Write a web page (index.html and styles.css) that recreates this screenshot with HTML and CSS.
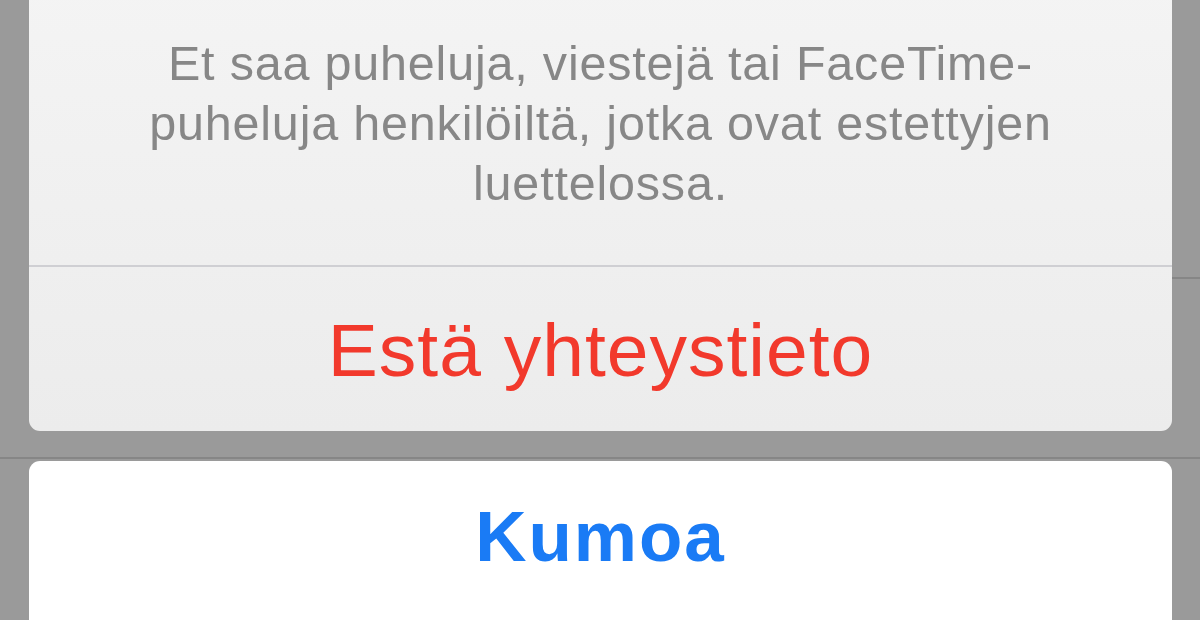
FILE: index.html
```html
<!DOCTYPE html>
<html lang="fi">
<head>
    <meta charset="UTF-8">
    <title>Estä yhteystieto</title>
    <link rel="stylesheet" href="styles.css">
</head>
<body>
<div class="sheet-wrap">
    <div class="sheet sheet-main">
        <p class="sheet-msg">Et saa puheluja, viestejä tai FaceTime-<br>puheluja henkilöiltä, jotka ovat estettyjen<br>luettelossa.</p>
        <div class="sheet-btn btn-danger">Estä yhteystieto</div>
    </div>
    <div class="sheet sheet-cancel">
        <div class="sheet-btn btn-cancel">Kumoa</div>
    </div>
</div>
</body>
</html>
```

FILE: styles.css
```css
html, body {
    margin: 0;
    height: 620px;
    overflow: hidden;
}
body {
    font-family: "Liberation Sans", Arial, sans-serif;
    /* dimmed table behind the sheet, with its separators */
    background:
        linear-gradient(#868686, #868686) 0 457px / 100% 2px no-repeat,
        linear-gradient(#868686, #868686) 1172px 277px / 28px 2px no-repeat,
        #9a9a9a;
}
.sheet-wrap {
    display: flex;
    flex-direction: column;
    gap: 30px;
    padding: 0 28px 0 29px;
    margin-top: -20px;
}
.sheet {
    border-radius: 11px;
    overflow: hidden;
}
.sheet-main {
    background: linear-gradient(#f4f4f4, #ececec);
}
.sheet-msg {
    margin: 0;
    padding: 53px 0 52px;
    border-bottom: 2px solid #cfcfd3;
    text-align: center;
    font-size: 48.5px;
    line-height: 60px;
    letter-spacing: 0.8px;
    color: #878787;
}
.sheet-btn {
    text-align: center;
}
.btn-danger {
    height: 164px;
    line-height: 166px;
    font-size: 75px;
    letter-spacing: 1px;
    color: #f2392c;
}
.sheet-cancel {
    background: #fff;
    height: 175px;
}
.btn-cancel {
    line-height: 151px;
    font-size: 71px;
    font-weight: bold;
    letter-spacing: 2px;
    color: #1a7bf5;
}
```
